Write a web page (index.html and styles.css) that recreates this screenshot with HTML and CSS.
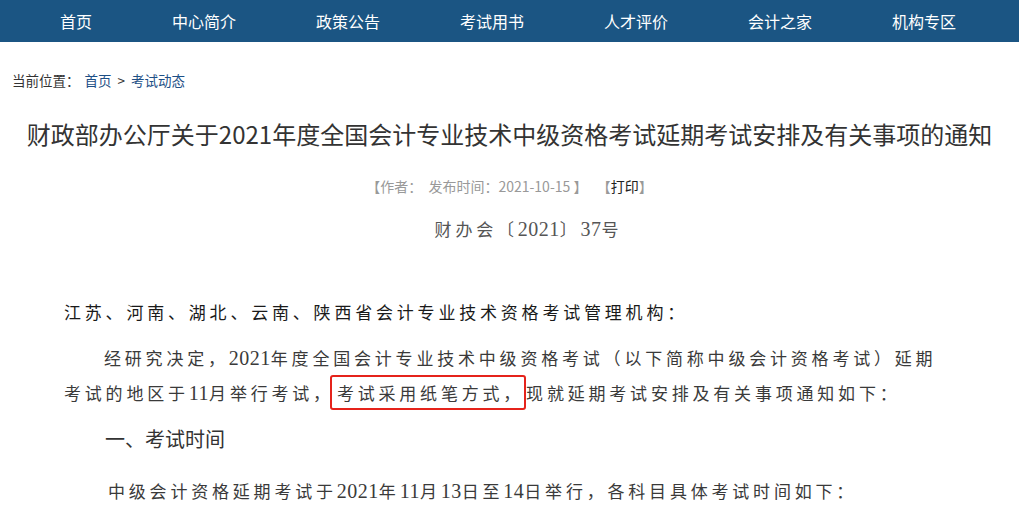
FILE: index.html
```html
<!DOCTYPE html>
<html lang="zh-CN">
<head>
<meta charset="utf-8">
<title>财政部办公厅关于2021年度全国会计专业技术中级资格考试延期考试安排及有关事项的通知</title>
<link rel="stylesheet" href="styles.css">
</head>
<body>
<nav class="topnav">
  <a class="nav-item">首页</a>
  <a class="nav-item">中心简介</a>
  <a class="nav-item">政策公告</a>
  <a class="nav-item">考试用书</a>
  <a class="nav-item">人才评价</a>
  <a class="nav-item">会计之家</a>
  <a class="nav-item">机构专区</a>
</nav>
<div class="crumb">当前位置：<a class="crumb-link">首页</a>&gt;<a class="crumb-link">考试动态</a></div>
<h1 class="title">财政部办公厅关于2021年度全国会计专业技术中级资格考试延期考试安排及有关事项的通知</h1>
<div class="meta">【作者：&nbsp; 发布时间：2021-10-15 】&nbsp;&nbsp; 【<span class="print">打印</span>】</div>
<article class="content">
  <p class="docno">财办会〔<span class="num">2021</span>〕<span class="num">37</span>号</p>
  <p class="salute">江苏、河南、湖北、云南、陕西省会计专业技术资格考试管理机构：</p>
  <p class="para indent">经研究决定，<span class="num">2021</span>年度全国会计专业技术中级资格考试（以下简称中级会计资格考试）延期考试的地区于<span class="num">11</span>月举行考试，<span class="mark">考试采用纸笔方式，</span>现就延期考试安排及有关事项通知如下：</p>
  <h2 class="section">一、考试时间</h2>
  <p class="para indent-last">中级会计资格延期考试于<span class="num">2021</span>年<span class="num">11</span>月<span class="num">13</span>日至<span class="num">14</span>日举行，各科目具体考试时间如下：</p>
</article>
</body>
</html>
```
FILE: styles.css
```css
* { box-sizing: border-box; }
body {
  margin: 0;
  background: #fff;
  font-family: "Noto Sans CJK SC", "Noto Sans", sans-serif;
  color: #333;
}
.topnav {
  display: flex;
  height: 42px;
  padding-left: 20px;
  background: #1b5583;
}
.nav-item {
  padding: 0 40px;
  line-height: 42px;
  font-size: 16px;
  color: #fff;
  text-decoration: none;
}
.crumb {
  margin-top: 28px;
  padding-left: 12px;
  font-size: 13.5px;
  line-height: 20px;
  color: #333;
}
.crumb-link {
  margin: 0 6px;
  color: #1d4f86;
  text-decoration: none;
}
.crumb-link:first-child { margin-left: 5px; }
.title {
  margin: 26px 0 0;
  text-align: center;
  font-size: 24px;
  font-weight: 400;
  line-height: 36px;
  color: #333;
}
.meta {
  margin-top: 24px;
  text-align: center;
  font-size: 14px;
  line-height: 20px;
  color: #999;
}
.print { color: #222; }
.content {
  margin: 0 64px;
  font-size: 17px;
  letter-spacing: 3.8px;
  color: #3a3a3a;
}
.num {
  font-family: "Liberation Serif", serif;
  font-size: 20px;
  letter-spacing: 0.5px;
  line-height: 1;
}
.docno {
  margin: 18px 0 0;
  line-height: 30px;
  text-align: center;
  color: #555;
  padding-left: 38px;
}
.salute {
  margin: 50px 0 0;
  line-height: 35px;
  color: #1a1a1a;
}
.para {
  margin: 11px 0 0;
  line-height: 35px;
}
.indent { text-indent: 40px; }
.indent-last { margin-top: 19px; text-indent: 44px; }
.mark {
  border: 2px solid #e5231b;
  border-radius: 3px;
  padding: 3px 0 3px 5px;
  margin-left: -4px;
}
.section {
  margin: 14px 0 0 41px;
  font-size: 20px;
  font-weight: 400;
  line-height: 30px;
  letter-spacing: 0;
  color: #333;
}
```
